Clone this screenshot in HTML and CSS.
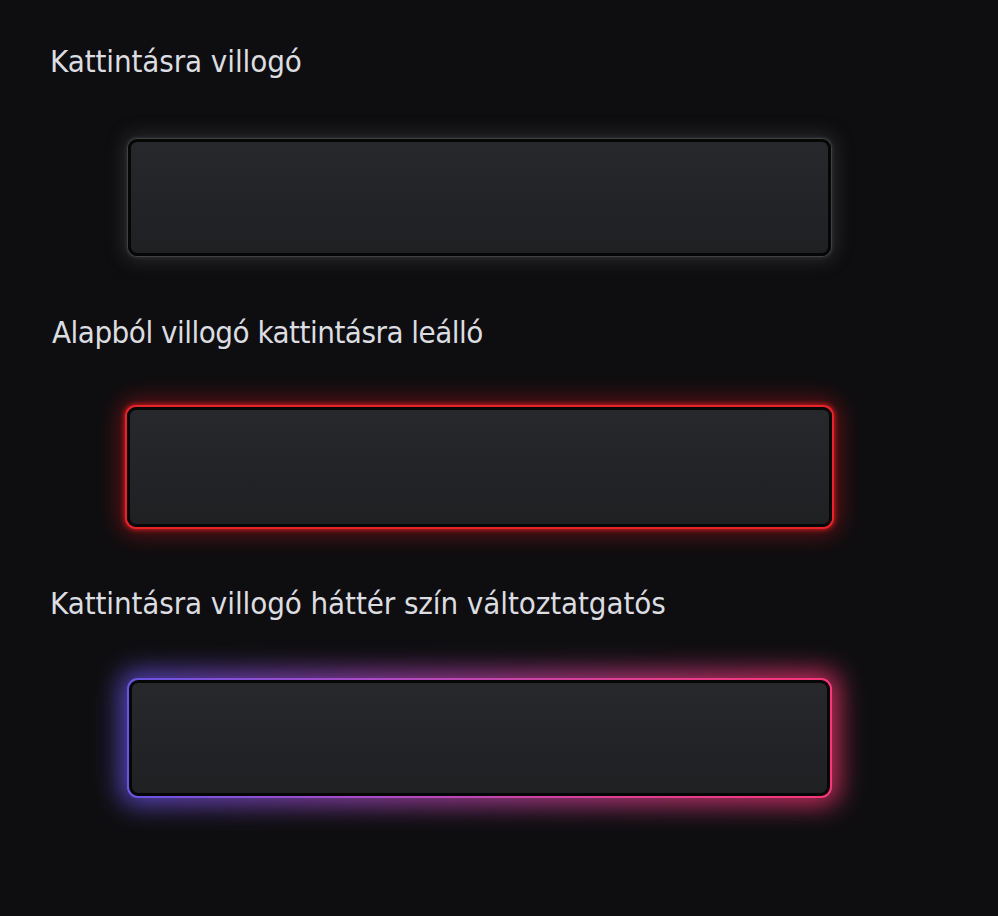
FILE: index.html
```html
<!DOCTYPE html>
<html lang="hu">
<head>
<meta charset="utf-8">
<link rel="stylesheet" href="styles.css">
</head>
<body>
<main class="page">
  <section class="item">
    <div class="label">Kattintásra villogó</div>
    <div class="box box-plain"></div>
  </section>
  <section class="item item-later">
    <div class="label label-2">Alapból villogó kattintásra leálló</div>
    <div class="box box-red"></div>
  </section>
  <section class="item item-later">
    <div class="label">Kattintásra villogó háttér szín változtatgatós</div>
    <div class="frame-grad"><div class="box box-inner"></div></div>
  </section>
</main>
</body>
</html>
```
FILE: styles.css
```css
html, body {
  margin: 0;
  padding: 0;
  background: #0e0e10;
}
.page {
  width: 998px;
  height: 916px;
  padding: 44px 0 0 50px;
  box-sizing: border-box;
  display: flex;
  flex-direction: column;
  gap: 56px;
  overflow: hidden;
}
.item {
  display: flex;
  flex-direction: column;
  gap: 61px;
}
.item-later {
  gap: 58px;
}
.item-later .label {
  padding-top: 3px;
}
.label {
  font-family: "DejaVu Sans Condensed", "DejaVu Sans", sans-serif;
  font-size: 31px;
  letter-spacing: -0.1px;
  line-height: 34px;
  color: #dcdde0;
  white-space: nowrap;
}
.label-2 { margin-left: 2px; letter-spacing: -0.5px; }
.box {
  margin-left: 78px;
  width: 703px;
  height: 117px;
  box-sizing: border-box;
  border-radius: 9px;
  border: 3px solid #060607;
  background: linear-gradient(180deg, #26282c 0%, #222427 50%, #1e2022 100%);
}
.box-plain {
  box-shadow: 0 0 0 1px #404144, 0 0 3px 2px #2c2d30, 0 0 18px 5px rgba(90, 90, 95, 0.35);
}
.box-red {
  width: 705px;
  margin-left: 77px;
  height: 120px;
  box-shadow: 0 0 0 2px #e8232a, 0 0 5px 3px rgba(220, 30, 35, 0.8), 0 0 22px 8px rgba(190, 20, 25, 0.45);
}
.frame-grad {
  position: relative;
  isolation: isolate;
  margin-left: 77px;
  width: 705px;
  height: 120px;
  padding: 2px;
  box-sizing: border-box;
  border-radius: 11px;
  background: linear-gradient(90deg, #6f5ce8 0%, #b04fd0 35%, #e6449c 70%, #ff3c86 100%);
}
.frame-grad::before {
  content: "";
  position: absolute;
  inset: -7px;
  border-radius: 16px;
  background: linear-gradient(90deg, #6250e0 0%, #a848c0 35%, #d83e8c 70%, #f5336e 100%);
  filter: blur(13px);
  opacity: 0.8;
  z-index: -1;
}
.box-inner {
  position: relative;
  margin-left: 0;
  width: 100%;
  height: 100%;
  border-radius: 9px;
}
```
